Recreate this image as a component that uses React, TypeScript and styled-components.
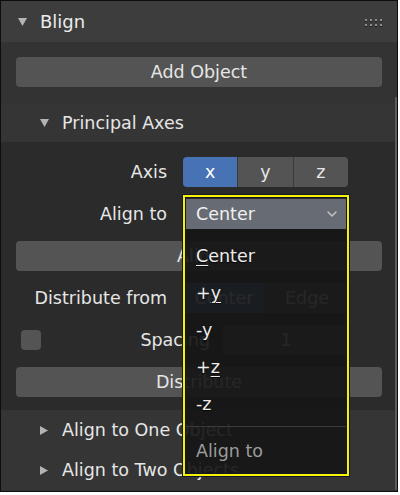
import React from "react";
import styled, { createGlobalStyle } from "styled-components";
import { ChevronDown } from "lucide-react";

const Global = createGlobalStyle`
  html, body { margin: 0; padding: 0; background: #ffffff; }
  body { font-family: "DejaVu Sans", "Liberation Sans", sans-serif; }
`;

const Frame = styled.div`
  position: relative;
  width: 398px;
  height: 492px;
  box-sizing: border-box;
  border: 1px solid #0e0e0e;
  background: #333333;
  overflow: hidden;
  font-family: "DejaVu Sans", "Liberation Sans", sans-serif;
  font-size: 17.5px;
  color: #e6e6e6;
  display: flex;
  flex-direction: column;
`;

const Header = styled.div`
  height: 41px;
  flex: none;
  background: #3d3d3d;
  display: flex;
  align-items: center;
  padding: 0 15px 0 17px;
`;

const Title = styled.span`
  margin-left: 13px;
  font-size: 18px;
  color: #ececec;
`;

const Grip = styled.div`
  margin-left: auto;
  display: grid;
  grid-template-columns: repeat(4, 2px);
  grid-auto-rows: 2px;
  column-gap: 3px;
  row-gap: 3px;
  padding-top: 1px;
`;

const Dot = styled.span`
  width: 2px;
  height: 2px;
  background: #8c8c8c;
  box-shadow: 0 1px 0 #1e1e1e;
`;

const Section = styled.div`
  padding: 15px 15px 17px;
  flex: none;
`;

const WideButton = styled.div`
  height: 30px;
  border-radius: 4px;
  background: #545454;
  display: flex;
  align-items: center;
  justify-content: center;
  color: #e6e6e6;
`;

const SubHeader = styled.div<{ $h: number }>`
  height: ${(p) => p.$h}px;
  flex: none;
  display: flex;
  align-items: center;
  padding-left: 39px;
  background: #353535;
`;

const SubTitle = styled.span<{ $gap: number }>`
  margin-left: ${(p) => p.$gap}px;
`;

const SubBody = styled.div`
  background: #2b2b2b;
  padding: 15px 15px 13px;
  display: flex;
  flex-direction: column;
  gap: 12px;
  flex: none;
`;

const PropRow = styled.div`
  display: grid;
  grid-template-columns: 151px 165px;
  column-gap: 16px;
  align-items: center;
  height: 30px;
`;

const Label = styled.span`
  text-align: right;
  white-space: nowrap;
`;

const Segmented = styled.div`
  display: flex;
  height: 30px;
  gap: 1px;
  border-radius: 4px;
  overflow: hidden;
  background: #3a3a3a;
`;

const Seg = styled.div<{ $active?: boolean }>`
  flex: 1;
  display: flex;
  align-items: center;
  justify-content: center;
  background: ${(p) => (p.$active ? "#4772b3" : "#545454")};
  color: ${(p) => (p.$active ? "#ffffff" : "#e6e6e6")};
`;

const DropdownAnchor = styled.div`
  position: relative;
  height: 30px;
`;

const Field = styled.div`
  height: 30px;
  box-sizing: border-box;
  border-radius: 4px 4px 0 0;
  background: #676b73;
  display: flex;
  align-items: center;
  padding: 0 8px 0 13px;
  color: #f0f0f0;
  justify-content: space-between;
`;

const Menu = styled.div`
  position: absolute;
  top: 30px;
  left: 0;
  right: 0;
  height: 245px;
  background: rgba(22, 22, 22, 0.92);
  padding-top: 8px;
  box-sizing: border-box;
  display: flex;
  flex-direction: column;
  z-index: 10;
`;

const Item = styled.div`
  height: 37px;
  flex: none;
  display: flex;
  align-items: center;
  padding-left: 13px;
  color: #ececec;
  text-shadow: 0 1px 1px rgba(0, 0, 0, 0.7);
`;

const Mn = styled.span`
  text-decoration: underline;
  text-underline-offset: 3px;
  text-decoration-thickness: 1px;
`;

const Sep = styled.div`
  margin-top: 4px;
  height: 1px;
  background: #3a3a3a;
  flex: none;
`;

const MenuTitle = styled.div`
  height: 47px;
  display: flex;
  align-items: center;
  padding-left: 13px;
  color: #9c9c9c;
`;

const Highlight = styled.div`
  position: absolute;
  top: -4px;
  left: 0;
  right: -1px;
  height: 281px;
  box-sizing: border-box;
  border: 2px solid #f4f400;
  box-shadow: 0 0 0 1px #15152e, inset 0 0 0 1px #15152e;
  pointer-events: none;
  z-index: 11;
`;

const SpacingRow = styled.div`
  display: flex;
  align-items: center;
  height: 30px;
`;

const Check = styled.div`
  width: 20px;
  height: 20px;
  margin-left: 5px;
  border-radius: 4px;
  background: #545454;
  flex: none;
`;

const SpacingLabel = styled.span`
  flex: 1;
  text-align: right;
  padding-right: 13px;
`;

const NumField = styled.div`
  width: 126px;
  height: 30px;
  margin-right: 33px;
  border-radius: 4px;
  background: #545454;
  display: flex;
  align-items: center;
  justify-content: center;
`;

const Scrollbar = styled.div`
  position: absolute;
  right: 0;
  top: 96px;
  bottom: 1px;
  width: 2px;
  border-radius: 1px;
  background: #5c5c5c;
`;

const TriDown = () => (
  <svg width="9" height="8" viewBox="0 0 9 8">
    <polygon points="0,0 9,0 4.5,8" fill="#b4b4b4" />
  </svg>
);

const TriRight = () => (
  <svg width="8" height="9" viewBox="0 0 8 9">
    <polygon points="0,0 8,4.5 0,9" fill="#b4b4b4" />
  </svg>
);

export default function App() {
  return (
    <>
      <Global />
      <Frame>
        <Header>
          <TriDown />
          <Title>Blign</Title>
          <Grip>
            {Array.from({ length: 8 }).map((_, i) => (
              <Dot key={i} />
            ))}
          </Grip>
        </Header>
        <Section>
          <WideButton>Add Object</WideButton>
        </Section>
        <SubHeader $h={38}>
          <TriDown />
          <SubTitle $gap={13}>Principal Axes</SubTitle>
        </SubHeader>
        <SubBody>
          <PropRow>
            <Label>Axis</Label>
            <Segmented>
              <Seg $active>x</Seg>
              <Seg>y</Seg>
              <Seg>z</Seg>
            </Segmented>
          </PropRow>
          <PropRow>
            <Label>Align to</Label>
            <DropdownAnchor>
              <Field>
                <span>Center</span>
                <ChevronDown size={16} strokeWidth={2.2} color="#c4c4c4" />
              </Field>
              <Menu>
                <Item>
                  <span>
                    <Mn>C</Mn>enter
                  </span>
                </Item>
                <Item>
                  <span>
                    +<Mn>y</Mn>
                  </span>
                </Item>
                <Item>-y</Item>
                <Item>
                  <span>
                    +<Mn>z</Mn>
                  </span>
                </Item>
                <Item>-z</Item>
                <Sep />
                <MenuTitle>Align to</MenuTitle>
              </Menu>
              <Highlight />
            </DropdownAnchor>
          </PropRow>
          <WideButton>Align</WideButton>
          <PropRow>
            <Label>Distribute from</Label>
            <Segmented>
              <Seg $active>Center</Seg>
              <Seg>Edge</Seg>
            </Segmented>
          </PropRow>
          <SpacingRow>
            <Check />
            <SpacingLabel>Spacing</SpacingLabel>
            <NumField>1</NumField>
          </SpacingRow>
          <WideButton>Distribute</WideButton>
        </SubBody>
        <SubHeader $h={40}>
          <TriRight />
          <SubTitle $gap={14}>Align to One Object</SubTitle>
        </SubHeader>
        <SubHeader $h={40}>
          <TriRight />
          <SubTitle $gap={14}>Align to Two Objects</SubTitle>
        </SubHeader>
        <Scrollbar />
      </Frame>
    </>
  );
}
